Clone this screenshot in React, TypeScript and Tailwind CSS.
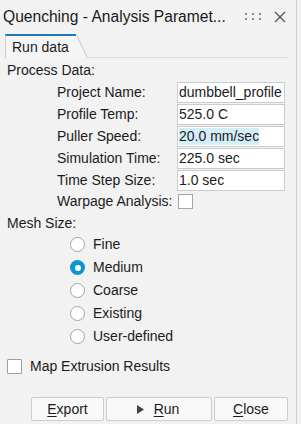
import { useState } from "react";

const fields = [
  { label: "Project Name:", value: "dumbbell_profile" },
  { label: "Profile Temp:", value: "525.0 C" },
  { label: "Puller Speed:", value: "20.0 mm/sec", selected: true },
  { label: "Simulation Time:", value: "225.0 sec" },
  { label: "Time Step Size:", value: "1.0 sec" },
];

const meshSizes = ["Fine", "Medium", "Coarse", "Existing", "User-defined"];

function Radio({ checked }: { checked: boolean }) {
  if (checked) {
    return (
      <span className="flex h-[15px] w-[15px] items-center justify-center rounded-full bg-[#0b95d4]">
        <span className="h-[6px] w-[6px] rounded-full bg-white" />
      </span>
    );
  }
  return <span className="h-[15px] w-[15px] rounded-full border border-[#a3a3a3] bg-white" />;
}

export default function App() {
  const [mesh, setMesh] = useState("Medium");

  return (
    <div className="h-[424px] w-[301px] overflow-hidden bg-[#f2f2f2] font-['Liberation_Sans',Arial,sans-serif] text-[14px] text-[#1b1b1b]">
      <div className="flex h-full w-[297px] flex-col border-r border-[#cdcdcd]">
        {/* title bar */}
        <div className="flex h-[34px] items-center pl-[3px] pr-[10px]">
          <span className="text-[15.6px] leading-[20px] text-[#1a1a1a]">Quenching - Analysis Paramet...</span>
          <svg className="ml-auto" width="18" height="10" viewBox="0 0 18 10" fill="#8a8a8a">
            <rect x="0" y="1" width="2" height="2" />
            <rect x="7" y="1" width="2" height="2" />
            <rect x="14" y="1" width="2" height="2" />
            <rect x="0" y="6" width="2" height="2" />
            <rect x="7" y="6" width="2" height="2" />
            <rect x="14" y="6" width="2" height="2" />
          </svg>
          <svg className="ml-[11px]" width="12" height="12" viewBox="0 0 12 12" stroke="#555" strokeWidth="1.4">
            <path d="M1 1 L11 11 M11 1 L1 11" />
          </svg>
        </div>

        {/* tab strip */}
        <div className="flex h-[24px] pl-[5px] pr-[7px]">
          <div className="w-[71px] border-l border-t-2 border-l-[#cfcfcf] border-t-[#1f78b8] bg-[#f5f5f5] pl-[6px] pt-[3px] leading-[17px]">
            Run data
          </div>
          <svg width="12" height="24" viewBox="0 0 12 24" className="shrink-0">
            <path d="M0 0 L0 24 L12 24 Z" fill="#f5f5f5" />
            <path d="M0.5 1 L11.5 24" stroke="#c8c8c8" strokeWidth="1" fill="none" />
          </svg>
          <div className="flex-1 border-b border-[#dcdcdc]" />
        </div>

        <div className="ml-[7px] mt-[4px] h-[17px] leading-[17px]">Process Data:</div>

        <div className="mt-[3px] flex flex-col gap-[1px]">
          {fields.map((f) => (
            <div key={f.label} className="ml-[57px] flex h-[21px] items-center">
              <span className="w-[120px] leading-[17px]">{f.label}</span>
              <div className="flex h-[21px] w-[108px] items-center border border-[#cbcbcb] bg-white pl-[1px]">
                <span className={f.selected ? "bg-[#d4eef9] leading-[17px]" : "leading-[17px]"}>{f.value}</span>
              </div>
            </div>
          ))}
          <div className="ml-[57px] mt-[1px] flex h-[16px] items-center">
            <span className="w-[121px] leading-[17px]">Warpage Analysis:</span>
            <span className="h-[15px] w-[15px] border border-[#a6a6a6] bg-white" />
          </div>
        </div>

        <div className="ml-[7px] mt-[6px] h-[17px] leading-[17px]">Mesh Size:</div>

        <div className="mt-[1px] flex flex-col">
          {meshSizes.map((m) => (
            <div key={m} className="flex h-[23px] items-center gap-[8px] pl-[70px]" onClick={() => setMesh(m)}>
              <Radio checked={mesh === m} />
              <span className="leading-[17px]">{m}</span>
            </div>
          ))}
        </div>

        <div className="ml-[7px] mt-[10px] flex h-[16px] items-center gap-[8px]">
          <span className="h-[15px] w-[15px] rounded-[1px] border border-[#9e9e9e] bg-white" />
          <span className="leading-[17px]">Map Extrusion Results</span>
        </div>

        <div className="ml-[31px] mt-[23px] flex h-[24px] gap-[2px]">
          <button className="w-[73px] rounded-[2px] border border-[#cdcdcd] bg-[#f8f8f8] leading-[17px]">
            <span className="underline underline-offset-2">E</span>xport
          </button>
          <button className="flex w-[106px] items-center justify-center gap-[10px] rounded-[2px] border border-[#cdcdcd] bg-[#f8f8f8] pr-[2px] leading-[17px]">
            <svg width="7" height="9" viewBox="0 0 7 9" fill="#444">
              <path d="M0 0 L7 4.5 L0 9 Z" />
            </svg>
            <span>
              <span className="underline underline-offset-2">R</span>un
            </span>
          </button>
          <button className="w-[74px] rounded-[2px] border border-[#cdcdcd] bg-[#f8f8f8] leading-[17px]">
            <span className="underline underline-offset-2">C</span>lose
          </button>
        </div>
      </div>
    </div>
  );
}
